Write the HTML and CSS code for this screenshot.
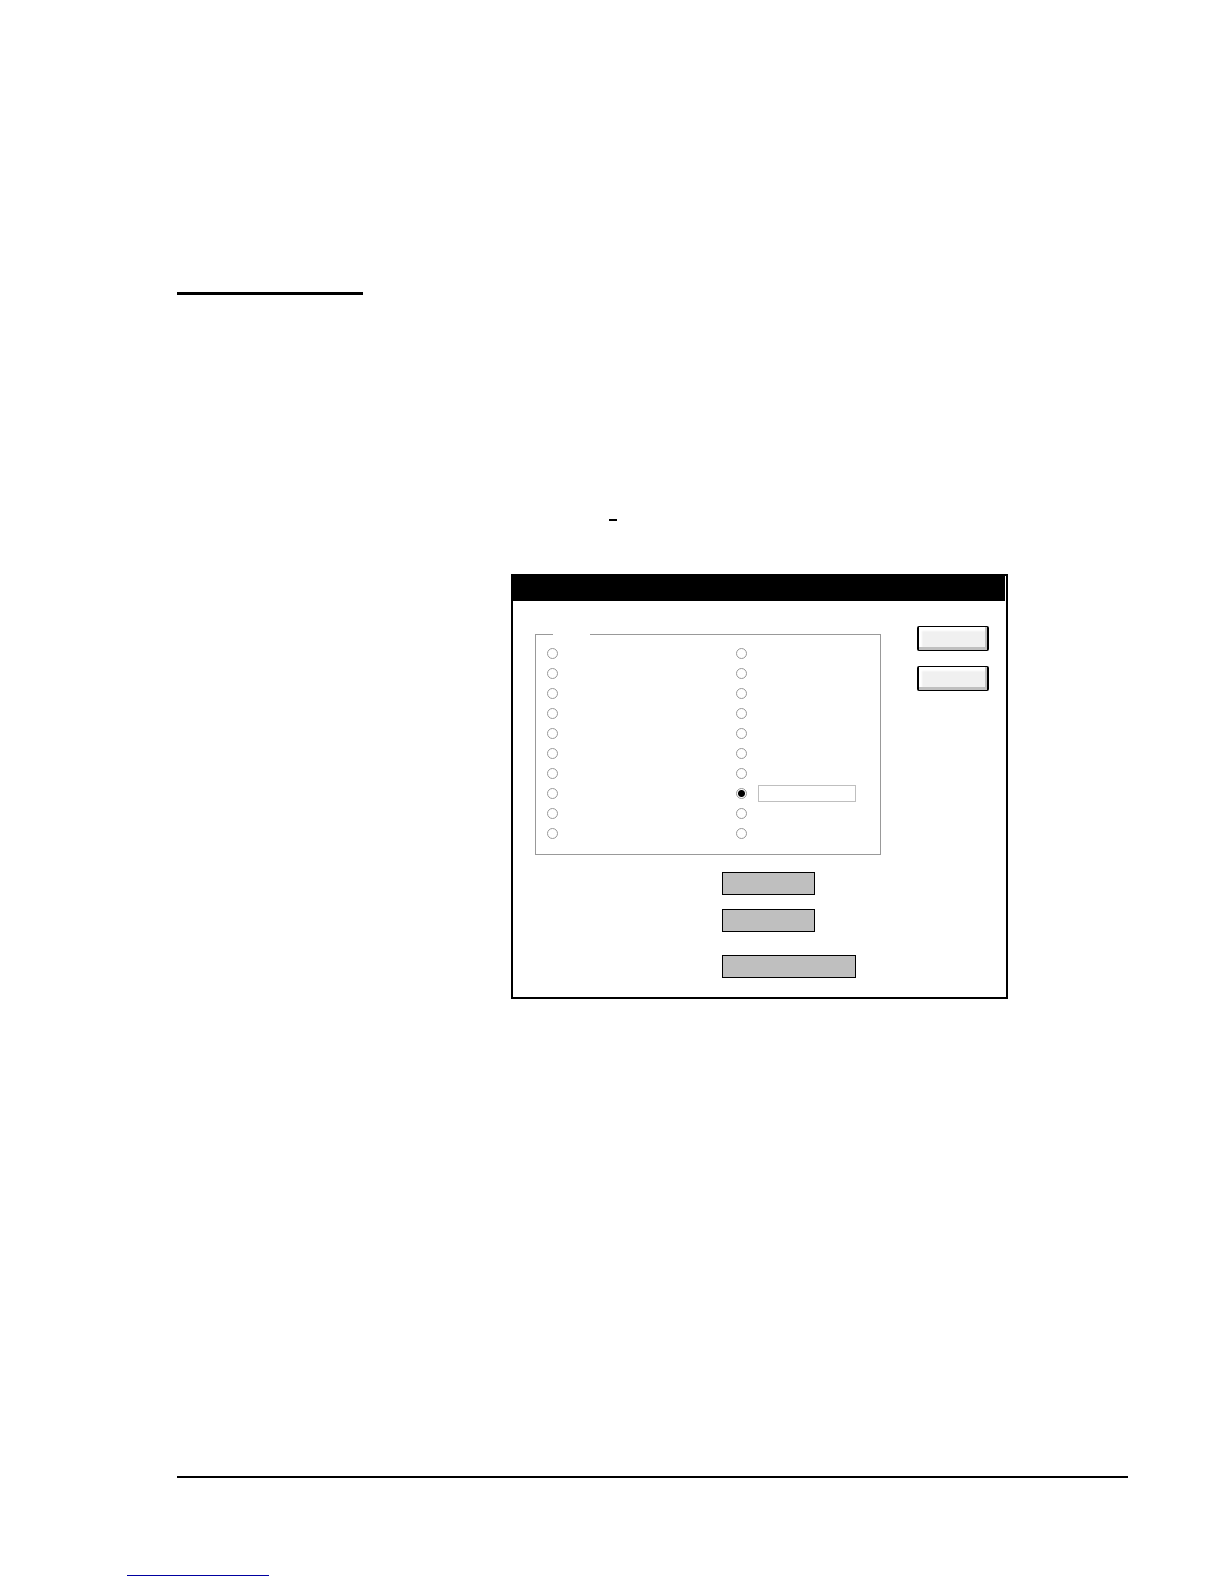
FILE: index.html
```html
<!DOCTYPE html>
<html lang="en">
<head>
  <meta charset="UTF-8" />
  <meta name="viewport" content="width=device-width, initial-scale=1.0" />
  <title>Dialog</title>
  <link rel="stylesheet" href="styles.css">
</head>
<body>
  <main class="page">
    <hr class="heading-rule">
    <div class="content">
      <div class="hotkey"></div>
      <form class="dialog">
        <div class="title-bar"></div>
        <div class="dialog-body">
          <div class="settings">
            <fieldset class="options">
              <legend></legend>
              <div class="option"><input type="radio" name="option" aria-label="Option 1"></div>
              <div class="option"><input type="radio" name="option" aria-label="Option 2"></div>
              <div class="option"><input type="radio" name="option" aria-label="Option 3"></div>
              <div class="option"><input type="radio" name="option" aria-label="Option 4"></div>
              <div class="option"><input type="radio" name="option" aria-label="Option 5"></div>
              <div class="option"><input type="radio" name="option" aria-label="Option 6"></div>
              <div class="option"><input type="radio" name="option" aria-label="Option 7"></div>
              <div class="option"><input type="radio" name="option" aria-label="Option 8"></div>
              <div class="option"><input type="radio" name="option" aria-label="Option 9"></div>
              <div class="option"><input type="radio" name="option" aria-label="Option 10"></div>
              <div class="option"><input type="radio" name="option" aria-label="Option 11"></div>
              <div class="option"><input type="radio" name="option" aria-label="Option 12"></div>
              <div class="option"><input type="radio" name="option" aria-label="Option 13"></div>
              <div class="option"><input type="radio" name="option" aria-label="Option 14"></div>
              <div class="option"><input type="radio" name="option" aria-label="Option 15"></div>
              <div class="option"><input type="radio" name="option" aria-label="Option 16"></div>
              <div class="option"><input type="radio" name="option" aria-label="Option 17"></div>
              <div class="option">
                <input type="radio" name="option" aria-label="Custom option" checked>
                <input type="text" class="custom" aria-label="Custom value">
              </div>
              <div class="option"><input type="radio" name="option" aria-label="Option 19"></div>
              <div class="option"><input type="radio" name="option" aria-label="Option 20"></div>
            </fieldset>
            <div class="fields">
              <input type="text" class="field" aria-label="Field 1">
              <input type="text" class="field" aria-label="Field 2">
              <input type="text" class="field field-wide" aria-label="Field 3">
            </div>
          </div>
          <div class="actions">
            <button type="submit" aria-label="OK"></button>
            <button type="button" aria-label="Cancel"></button>
          </div>
        </div>
      </form>
    </div>
    <hr class="footer-rule">
  </main>
  <footer>
    <a href="#" class="footer-link" aria-label="Link"></a>
  </footer>
</body>
</html>
```
FILE: styles.css
```css
:root {
  --black: #000000;
  --gray: #bfbfbf;
  --line: #999999;
}
* {
  box-sizing: border-box;
  margin: 0;
  padding: 0;
}
body {
  font-family: "Liberation Sans", Arial, sans-serif;
  font-size: 12px;
  background-color: #ffffff;
  color: var(--black);
  display: flex;
  flex-direction: column;
  min-height: 100vh;
}
.page {
  flex: 1;
  display: flex;
  flex-direction: column;
  padding: 292px 96px 0 177px;
}
hr {
  border: none;
  background-color: var(--black);
}
.heading-rule {
  width: 186px;
  height: 3px;
}
.content {
  margin: 224px 0 60px 334px;
}
.hotkey {
  width: 8px;
  height: 2px;
  margin-left: 98px;
  background-color: var(--black);
}
.dialog {
  max-width: 497px;
  margin-top: 53px;
  border: 2px solid var(--black);
}
.title-bar {
  height: 25px;
  margin-right: 1px;
  background-color: var(--black);
}
.dialog-body {
  display: flex;
  justify-content: space-between;
  padding: 25px 17px 19px 22px;
}
.settings {
  width: 346px;
  padding-top: 8px;
}
.options {
  display: grid;
  grid-template-columns: 189px 1fr;
  grid-template-rows: repeat(10, 11px);
  grid-auto-flow: column;
  row-gap: 9px;
  padding: 13px 11px 15px;
  border: 1px solid var(--line);
}
.options legend {
  width: 37px;
  height: 1px;
  margin-left: 6px;
}
.option {
  display: flex;
  align-items: center;
  gap: 11px;
}
.option input[type="radio"] {
  appearance: none;
  flex: none;
  width: 11px;
  height: 11px;
  border: 1px solid var(--line);
  border-radius: 50%;
}
.option input[type="radio"]:checked {
  background: radial-gradient(circle, var(--black) 3px, transparent 4px);
}
.custom {
  flex: none;
  width: 98px;
  height: 17px;
  padding: 0 4px;
  border: 1px solid var(--gray);
  background-color: transparent;
}
.fields {
  display: flex;
  flex-direction: column;
  gap: 14px;
  margin: 17px 0 0 187px;
}
.field {
  width: 93px;
  height: 23px;
  padding: 0 4px;
  border: 1px solid var(--black);
  background-color: var(--gray);
}
.field-wide {
  width: 134px;
  margin-top: 9px;
}
.actions {
  display: flex;
  flex-direction: column;
  gap: 15px;
}
button {
  width: 72px;
  height: 25px;
  border: 1px solid var(--black);
  border-width: 1px 2px;
  border-radius: 2px;
  background-color: #f0f0f0;
  box-shadow: inset -2px -3px 0 var(--gray), inset 3px 4px 2px #ffffff;
  cursor: pointer;
}
.footer-rule {
  height: 2px;
  margin-top: auto;
}
footer {
  padding: 82px 0 8px 127px;
}
.footer-link {
  display: block;
  width: 142px;
  height: 16px;
  border-bottom: 1px solid #0000a0;
}
```
